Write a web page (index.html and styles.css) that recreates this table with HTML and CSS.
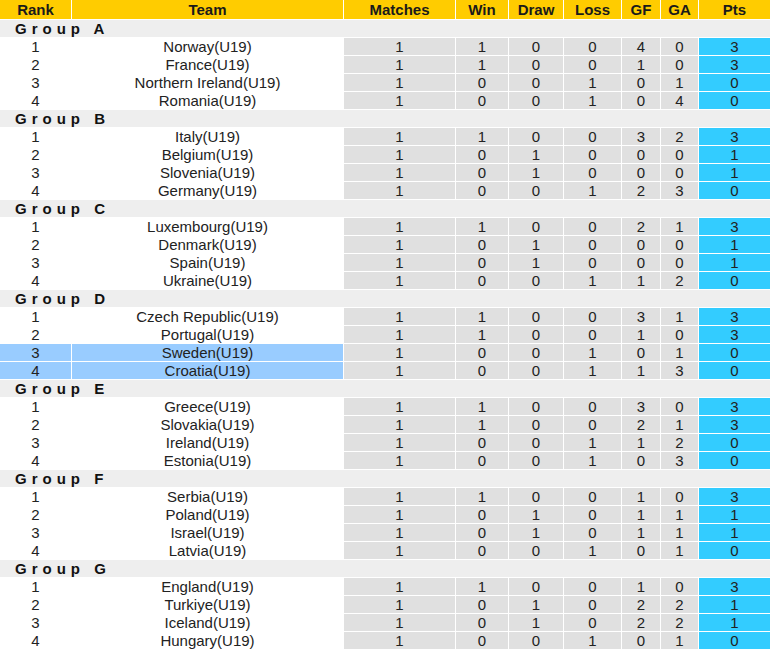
FILE: index.html
```html
<!DOCTYPE html>
<html>
<head>
<meta charset="utf-8">
<link rel="stylesheet" href="styles.css">
</head>
<body>
<table class="standings">
  <colgroup>
    <col class="c-rank"><col class="c-team"><col class="c-m"><col class="c-w"><col class="c-d"><col class="c-l"><col class="c-gf"><col class="c-ga"><col class="c-pts">
  </colgroup>
  <thead>
    <tr><th>Rank</th><th>Team</th><th>Matches</th><th>Win</th><th>Draw</th><th>Loss</th><th>GF</th><th>GA</th><th>Pts</th></tr>
  </thead>
  <tbody>
    <tr class="group"><td colspan="9">Group A</td></tr>
    <tr><td>1</td><td>Norway(U19)</td><td class="n">1</td><td class="n">1</td><td class="n">0</td><td class="n">0</td><td class="n">4</td><td class="n">0</td><td class="p">3</td></tr>
    <tr><td>2</td><td>France(U19)</td><td class="n">1</td><td class="n">1</td><td class="n">0</td><td class="n">0</td><td class="n">1</td><td class="n">0</td><td class="p">3</td></tr>
    <tr><td>3</td><td>Northern Ireland(U19)</td><td class="n">1</td><td class="n">0</td><td class="n">0</td><td class="n">1</td><td class="n">0</td><td class="n">1</td><td class="p">0</td></tr>
    <tr><td>4</td><td>Romania(U19)</td><td class="n">1</td><td class="n">0</td><td class="n">0</td><td class="n">1</td><td class="n">0</td><td class="n">4</td><td class="p">0</td></tr>

    <tr class="group"><td colspan="9">Group B</td></tr>
    <tr><td>1</td><td>Italy(U19)</td><td class="n">1</td><td class="n">1</td><td class="n">0</td><td class="n">0</td><td class="n">3</td><td class="n">2</td><td class="p">3</td></tr>
    <tr><td>2</td><td>Belgium(U19)</td><td class="n">1</td><td class="n">0</td><td class="n">1</td><td class="n">0</td><td class="n">0</td><td class="n">0</td><td class="p">1</td></tr>
    <tr><td>3</td><td>Slovenia(U19)</td><td class="n">1</td><td class="n">0</td><td class="n">1</td><td class="n">0</td><td class="n">0</td><td class="n">0</td><td class="p">1</td></tr>
    <tr><td>4</td><td>Germany(U19)</td><td class="n">1</td><td class="n">0</td><td class="n">0</td><td class="n">1</td><td class="n">2</td><td class="n">3</td><td class="p">0</td></tr>

    <tr class="group"><td colspan="9">Group C</td></tr>
    <tr><td>1</td><td>Luxembourg(U19)</td><td class="n">1</td><td class="n">1</td><td class="n">0</td><td class="n">0</td><td class="n">2</td><td class="n">1</td><td class="p">3</td></tr>
    <tr><td>2</td><td>Denmark(U19)</td><td class="n">1</td><td class="n">0</td><td class="n">1</td><td class="n">0</td><td class="n">0</td><td class="n">0</td><td class="p">1</td></tr>
    <tr><td>3</td><td>Spain(U19)</td><td class="n">1</td><td class="n">0</td><td class="n">1</td><td class="n">0</td><td class="n">0</td><td class="n">0</td><td class="p">1</td></tr>
    <tr><td>4</td><td>Ukraine(U19)</td><td class="n">1</td><td class="n">0</td><td class="n">0</td><td class="n">1</td><td class="n">1</td><td class="n">2</td><td class="p">0</td></tr>

    <tr class="group"><td colspan="9">Group D</td></tr>
    <tr><td>1</td><td>Czech Republic(U19)</td><td class="n">1</td><td class="n">1</td><td class="n">0</td><td class="n">0</td><td class="n">3</td><td class="n">1</td><td class="p">3</td></tr>
    <tr><td>2</td><td>Portugal(U19)</td><td class="n">1</td><td class="n">1</td><td class="n">0</td><td class="n">0</td><td class="n">1</td><td class="n">0</td><td class="p">3</td></tr>
    <tr class="hl"><td>3</td><td>Sweden(U19)</td><td class="n">1</td><td class="n">0</td><td class="n">0</td><td class="n">1</td><td class="n">0</td><td class="n">1</td><td class="p">0</td></tr>
    <tr class="hl"><td>4</td><td>Croatia(U19)</td><td class="n">1</td><td class="n">0</td><td class="n">0</td><td class="n">1</td><td class="n">1</td><td class="n">3</td><td class="p">0</td></tr>

    <tr class="group"><td colspan="9">Group E</td></tr>
    <tr><td>1</td><td>Greece(U19)</td><td class="n">1</td><td class="n">1</td><td class="n">0</td><td class="n">0</td><td class="n">3</td><td class="n">0</td><td class="p">3</td></tr>
    <tr><td>2</td><td>Slovakia(U19)</td><td class="n">1</td><td class="n">1</td><td class="n">0</td><td class="n">0</td><td class="n">2</td><td class="n">1</td><td class="p">3</td></tr>
    <tr><td>3</td><td>Ireland(U19)</td><td class="n">1</td><td class="n">0</td><td class="n">0</td><td class="n">1</td><td class="n">1</td><td class="n">2</td><td class="p">0</td></tr>
    <tr><td>4</td><td>Estonia(U19)</td><td class="n">1</td><td class="n">0</td><td class="n">0</td><td class="n">1</td><td class="n">0</td><td class="n">3</td><td class="p">0</td></tr>

    <tr class="group"><td colspan="9">Group F</td></tr>
    <tr><td>1</td><td>Serbia(U19)</td><td class="n">1</td><td class="n">1</td><td class="n">0</td><td class="n">0</td><td class="n">1</td><td class="n">0</td><td class="p">3</td></tr>
    <tr><td>2</td><td>Poland(U19)</td><td class="n">1</td><td class="n">0</td><td class="n">1</td><td class="n">0</td><td class="n">1</td><td class="n">1</td><td class="p">1</td></tr>
    <tr><td>3</td><td>Israel(U19)</td><td class="n">1</td><td class="n">0</td><td class="n">1</td><td class="n">0</td><td class="n">1</td><td class="n">1</td><td class="p">1</td></tr>
    <tr><td>4</td><td>Latvia(U19)</td><td class="n">1</td><td class="n">0</td><td class="n">0</td><td class="n">1</td><td class="n">0</td><td class="n">1</td><td class="p">0</td></tr>

    <tr class="group"><td colspan="9">Group G</td></tr>
    <tr><td>1</td><td>England(U19)</td><td class="n">1</td><td class="n">1</td><td class="n">0</td><td class="n">0</td><td class="n">1</td><td class="n">0</td><td class="p">3</td></tr>
    <tr><td>2</td><td>Turkiye(U19)</td><td class="n">1</td><td class="n">0</td><td class="n">1</td><td class="n">0</td><td class="n">2</td><td class="n">2</td><td class="p">1</td></tr>
    <tr><td>3</td><td>Iceland(U19)</td><td class="n">1</td><td class="n">0</td><td class="n">1</td><td class="n">0</td><td class="n">2</td><td class="n">2</td><td class="p">1</td></tr>
    <tr><td>4</td><td>Hungary(U19)</td><td class="n">1</td><td class="n">0</td><td class="n">0</td><td class="n">1</td><td class="n">0</td><td class="n">1</td><td class="p">0</td></tr>
  </tbody>
</table>
</body>
</html>
```
FILE: styles.css
```css
html, body {
  margin: 0;
  padding: 0;
  background: #ffffff;
}

.standings {
  border-collapse: separate;
  border-spacing: 1px;
  table-layout: fixed;
  width: 772px;
  margin: -1px 0 0 -1px;
  font-family: "Liberation Sans", Arial, sans-serif;
  font-size: 15px;
  color: #222222;
}

.c-rank { width: 71px; }
.c-team { width: 271px; }
.c-m { width: 111px; }
.c-w { width: 52px; }
.c-d { width: 54px; }
.c-l { width: 57px; }
.c-gf { width: 38px; }
.c-ga { width: 37px; }
.c-pts { width: 71px; }

.standings th {
  background: #ffcc00;
  color: #1a1a1a;
  font-weight: bold;
  height: 19px;
  padding: 0;
  line-height: 19px;
  text-align: center;
}

.standings td {
  height: 17px;
  padding: 0;
  line-height: 17px;
  text-align: center;
  white-space: nowrap;
  overflow: hidden;
}

.standings td.n {
  background: #e0e0e0;
}

.standings td.p {
  background: #33ccff;
}

.standings tr.hl td:nth-child(1),
.standings tr.hl td:nth-child(2) {
  background: #99ccff;
}

.standings tr.group td {
  background: #eeeeee;
  text-align: left;
  font-weight: bold;
  color: #111111;
  letter-spacing: 5px;
  padding-left: 15px;
}
```
